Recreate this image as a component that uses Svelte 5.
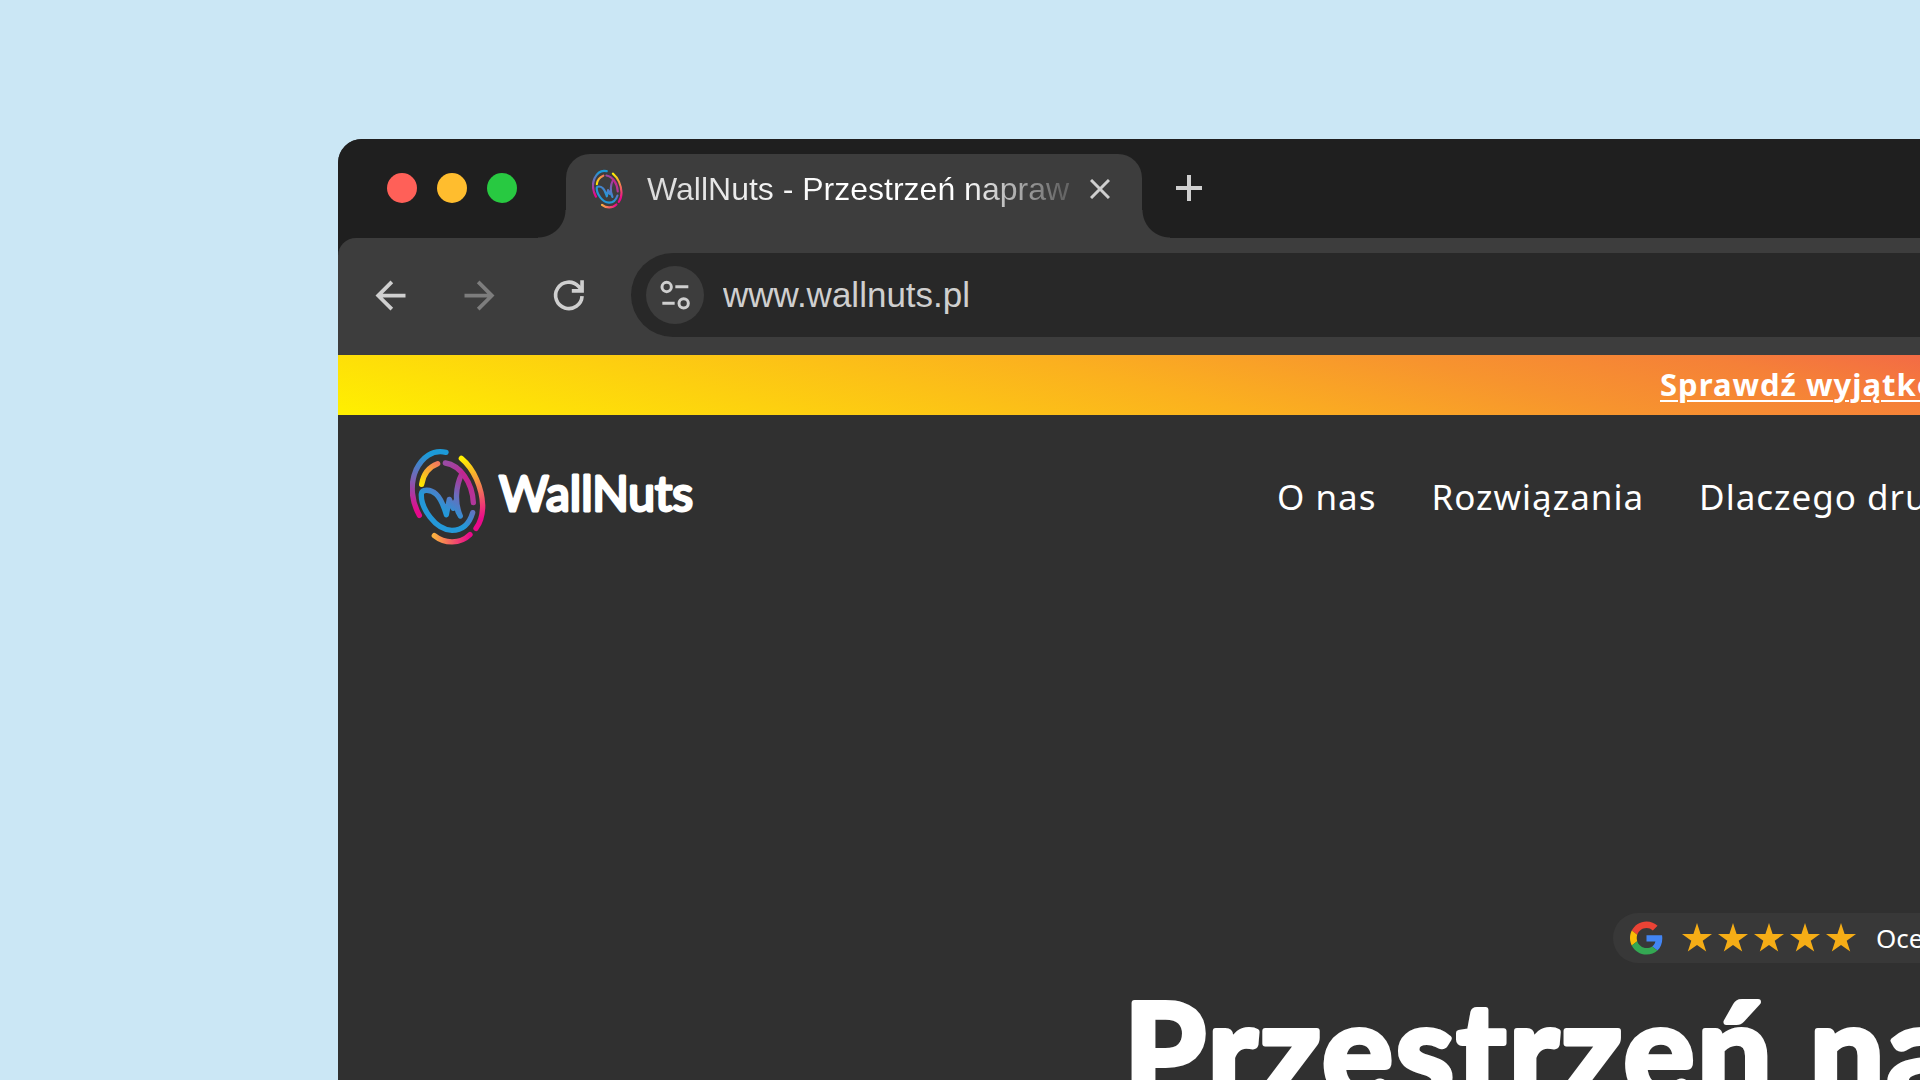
<script>
  const links = ['O nas', 'Rozwiązania', 'Dlaczego dru'];
  const stars = [1, 2, 3, 4, 5];
</script>

{#snippet mark(id, cls)}
  <svg class={cls} viewBox="30 21 228 297" fill="none" stroke-width="16" stroke-linecap="round" stroke-linejoin="round" aria-hidden="true">
    <defs>
      <linearGradient id="{id}-a" gradientUnits="userSpaceOnUse" x1="120" y1="36" x2="60" y2="228">
        <stop offset="0.1" stop-color="#1c9ad8" /><stop offset="0.5" stop-color="#7b62b4" /><stop offset="0.95" stop-color="#e5098a" />
      </linearGradient>
      <linearGradient id="{id}-b" gradientUnits="userSpaceOnUse" x1="190" y1="55" x2="235" y2="260">
        <stop offset="0" stop-color="#fff000" /><stop offset="0.5" stop-color="#f2705a" /><stop offset="0.9" stop-color="#ea0a8a" />
      </linearGradient>
      <linearGradient id="{id}-c" gradientUnits="userSpaceOnUse" x1="103" y1="290" x2="208" y2="290">
        <stop offset="0" stop-color="#fbb040" /><stop offset="1" stop-color="#ea0a8a" />
      </linearGradient>
      <linearGradient id="{id}-d" gradientUnits="userSpaceOnUse" x1="65" y1="133" x2="113" y2="71">
        <stop offset="0" stop-color="#ffe600" /><stop offset="1" stop-color="#f47b5c" />
      </linearGradient>
      <linearGradient id="{id}-e" gradientUnits="userSpaceOnUse" x1="110" y1="225" x2="200" y2="105">
        <stop offset="0.15" stop-color="#2498d8" /><stop offset="0.55" stop-color="#6b6cbc" /><stop offset="1" stop-color="#c4238f" />
      </linearGradient>
      <linearGradient id="{id}-f" gradientUnits="userSpaceOnUse" x1="136" y1="69" x2="220" y2="188">
        <stop offset="0" stop-color="#9a4ba5" /><stop offset="0.5" stop-color="#c4238f" /><stop offset="1" stop-color="#b0389a" />
      </linearGradient>
    </defs>
    <path stroke="url(#{id}-a)" d="M138 37 C98 27 66 52 48 90 C29 134 35 184 58 226" />
    <path stroke="url(#{id}-b)" d="M184 55 C222 86 246 144 248 196 C248 226 242 247 228 265" />
    <path stroke="url(#{id}-c)" d="M103 287 C134 312 180 313 210 284" />
    <path stroke="url(#{id}-d)" d="M113 71 C88 80 70 101 65 133" />
    <path stroke="url(#{id}-f)" d="M136 69 C180 76 217 126 220 188" />
    <path stroke="url(#{id}-e)" d="M218 218 C207 254 186 271 156 271 C105 270 62 203 64 162 C66 146 92 148 108 162 C126 178 132 202 139 224 L148 178 L160 205 L167 184 C169 204 174 218 181 228 C164 190 166 140 186 100" />
  </svg>
{/snippet}

<div class="desktop">
  <div class="window">
    <header class="strip">
      <div class="lights">
        <button class="light red" aria-label="Close window"></button>
        <button class="light amber" aria-label="Minimise window"></button>
        <button class="light green" aria-label="Zoom window"></button>
      </div>
      <div class="tab">
        {@render mark('tab', 'favicon')}
        <span class="title">WallNuts - Przestrzeń napraw</span>
        <button class="icon close" aria-label="Close tab">
          <svg viewBox="0 0 20 20" width="20" height="20"><path d="M1 1 19 19M19 1 1 19" /></svg>
        </button>
      </div>
      <button class="icon plus" aria-label="New tab">
        <svg viewBox="0 0 26 26" width="26" height="26"><path d="M13 0V26M0 13H26" /></svg>
      </button>
    </header>

    <div class="toolbar">
      <button class="icon nav" aria-label="Back">
        <svg viewBox="0 0 24 24"><path class="solid" d="M20 11H7.830l5.590-5.590L12 4l-8 8 8 8 1.410-1.410L7.830 13H20z" /></svg>
      </button>
      <button class="icon nav dim" aria-label="Forward">
        <svg viewBox="0 0 24 24"><path class="solid" d="M4 11h12.170l-5.590-5.590L12 4l8 8-8 8-1.410-1.410L16.170 13H4z" /></svg>
      </button>
      <button class="icon nav" aria-label="Reload">
        <svg viewBox="648 428 136 136"><g stroke-width="11"><path d="M757 498A40 40 0 1 1 746 468L757 480" /><path d="M757 450V482H726" /></g></svg>
      </button>
      <div class="address">
        <button class="icon site" aria-label="Site information">
          <svg viewBox="984 440 102 102" width="34" height="34">
            <g stroke-width="9"><circle cx="1010" cy="467" r="14" /><path d="M1036 466H1075M997 516H1034" /><circle cx="1061" cy="516" r="14" /></g>
          </svg>
        </button>
        <input type="text" value="www.wallnuts.pl" aria-label="Address" />
      </div>
    </div>

    <div class="promo"><a href="#oferta">Sprawdź wyjątko</a></div>

    <div class="site-head">
      <a class="brand" href="#start">
        {@render mark('site', 'logo')}
        <svg class="rounded wordmark" width="210" height="64"><text x="0" y="47">WallNuts</text></svg>
      </a>
      <nav>
        {#each links as link}<a href="#menu">{link}</a>{/each}
      </nav>
    </div>

    <main>
      <div class="rating">
        <svg class="google" viewBox="0 0 48 48" aria-label="Google">
          <path fill="#ea4335" d="M24 9.500c3.540 0 6.710 1.220 9.210 3.600l6.850-6.850C35.900 2.380 30.470 0 24 0 14.620 0 6.510 5.380 2.560 13.220l7.980 6.190C12.430 13.720 17.740 9.500 24 9.500z" />
          <path fill="#4285f4" d="M46.980 24.550c0-1.570-.15-3.090-.38-4.550H24v9.020h12.940c-.58 2.960-2.260 5.480-4.780 7.180l7.730 6c4.510-4.180 7.090-10.360 7.090-17.650z" />
          <path fill="#fbbc05" d="M10.530 28.590c-.48-1.450-.76-2.990-.76-4.590s.27-3.140.76-4.590l-7.980-6.190C.92 16.460 0 20.120 0 24s.92 7.540 2.560 10.780l7.970-6.190z" />
          <path fill="#34a853" d="M24 48c6.480 0 11.930-2.130 15.890-5.810l-7.730-6c-2.150 1.450-4.920 2.300-8.160 2.300-6.260 0-11.570-4.220-13.470-9.910l-7.980 6.190C6.510 42.620 14.620 48 24 48z" />
        </svg>
        <div class="stars">
          {#each stars as star}
            <svg viewBox="0 0 30 29" width="30" height="29" aria-hidden="true"><path d="M15 0 18.600 11H30L20.700 17.700 24.200 28.600 15 21.900 5.800 28.600 9.300 17.700 0 11H11.400Z" /></svg>
          {/each}
        </div>
        <span>Oce</span>
      </div>
      <h1>
        <svg class="rounded headline" width="100%" height="180"><text x="0" y="136">Przestrzeń na</text></svg>
      </h1>
    </main>
  </div>
</div>

<style>
  :global(body) { margin: 0; background: #cbe7f5; }
  :global(*) { box-sizing: border-box; }
  .desktop {
    height: 100vh;
    padding: 139px 0 0 338px;
    overflow: hidden;
    display: flex;
    background: #cbe7f5;
  }
  .window {
    flex: 1;
    min-width: 0;
    display: flex;
    flex-direction: column;
    overflow: hidden;
    border-top-left-radius: 24px;
    background: #303030;
    white-space: nowrap;
  }
  button { border: 0; padding: 0; background: none; flex: none; }
  a { color: inherit; text-decoration: none; }

  .strip {
    display: flex;
    align-items: flex-start;
    height: 99px;
    flex: none;
    padding-top: 15px;
    background: #1f1f1f;
  }
  .lights { display: flex; gap: 20px; padding: 19px 49px 0; }
  .light { width: 30px; height: 30px; border-radius: 50%; }
  .red { background: #ff6058; }
  .amber { background: #ffbd2e; }
  .green { background: #28c941; }
  .tab {
    position: relative;
    display: flex;
    align-items: center;
    width: 576px;
    height: 84px;
    padding: 0 32px 14px 26px;
    border-radius: 24px 24px 0 0;
    background: #3d3d3d;
  }
  .tab::before, .tab::after {
    content: '';
    position: absolute;
    bottom: 0;
    width: 28px;
    height: 28px;
  }
  .tab::before { right: 100%; background: radial-gradient(circle at 0 0, transparent 27px, #3d3d3d 28px); }
  .tab::after { left: 100%; background: radial-gradient(circle at 100% 0, transparent 27px, #3d3d3d 28px); }
  .favicon { width: 31px; height: 40px; margin-right: 24px; flex: none; }
  .title {
    flex: 1;
    overflow: hidden;
    font: 32px/40px "Liberation Sans", Arial, sans-serif;
    color: transparent;
    background: linear-gradient(90deg, #dadada 0, #ffffff 45%, #ffffff 75%, #666666 98%);
    background-clip: text;
  }
  .icon { display: grid; place-items: center; color: #cfcfcf; }
  .icon svg { fill: none; stroke: currentColor; stroke-width: 4px; }
  .icon .solid { fill: currentColor; stroke: none; }
  .icon.close svg { stroke-width: 3px; }
  .close { width: 20px; height: 40px; margin-left: 20px; }
  .plus { width: 30px; height: 30px; margin: 19px 0 0 32px; }

  .toolbar {
    display: flex;
    align-items: center;
    height: 117px;
    flex: none;
    padding: 0 0 4px 30px;
    background: #3d3d3d;
    border-top-left-radius: 18px;
    box-shadow: -18px -18px 0 18px #1f1f1f;
    clip-path: inset(0);
  }
  .nav { width: 44px; height: 44px; margin-right: 45px; }
  .nav svg { width: 45px; height: 45px; }
  .dim { color: #7d7d7d; }
  .address {
    flex: 1;
    display: flex;
    align-items: center;
    gap: 19px;
    height: 84px;
    margin-left: -4px;
    padding-left: 15px;
    border-radius: 42px 0 0 42px;
    background: #282828;
  }
  .site { width: 58px; height: 58px; border-radius: 50%; background: #3d3d3d; }
  input {
    flex: 1;
    min-width: 0;
    border: 0;
    padding: 0;
    outline: 0;
    background: none;
    color: #cfcfcf;
    font: 35px/44px "Liberation Sans", Arial, sans-serif;
  }

  .promo {
    height: 60px;
    flex: none;
    padding-left: 1322px;
    background: linear-gradient(14deg, #fff000 0, #fbb01f 51%, #f7942e 71%, #f58038 88%, #f36b45 100%);
    color: #ffffff;
    font: 700 31px/58px "Noto Sans", sans-serif;
    letter-spacing: 1px;
  }
  .promo a { text-decoration: underline; text-decoration-thickness: 2px; text-underline-offset: 4px; }

  .site-head {
    display: flex;
    align-items: center;
    height: 162px;
    flex: none;
    padding-left: 72px;
    color: #ffffff;
  }
  .brand {
    display: flex;
    align-items: center;
    gap: 13px;
    width: 867px;
    flex: none;
  }
  .rounded {
    display: block;
    overflow: visible;
    fill: #ffffff;
    stroke: #ffffff;
    stroke-linejoin: round;
    font-family: Lato, sans-serif;
  }
  .wordmark { font-size: 48px; stroke-width: 3px; }
  .logo { width: 76px; height: 99px; }
  nav { display: flex; gap: 55px; padding-top: 2px; font: 35px/48px "Noto Sans", sans-serif; letter-spacing: 1px; }

  main {
    display: flex;
    flex-direction: column;
    padding: 336px 0 0 786px;
    color: #ffffff;
  }
  .rating {
    display: flex;
    align-items: center;
    height: 50px;
    margin-left: 489px;
    padding-left: 17px;
    border-radius: 25px 0 0 25px;
    background: #383838;
    font: 26px/50px "Noto Sans", sans-serif;
  }
  .google { width: 33px; height: 34px; margin-right: 19px; flex: none; }
  .stars { display: flex; gap: 6px; margin-right: 20px; padding-bottom: 2px; fill: #f5ad16; }
  h1 { margin: 0; font-weight: 700; }
  .headline { font-size: 132px; stroke-width: 6px; letter-spacing: 3px; }
</style>
